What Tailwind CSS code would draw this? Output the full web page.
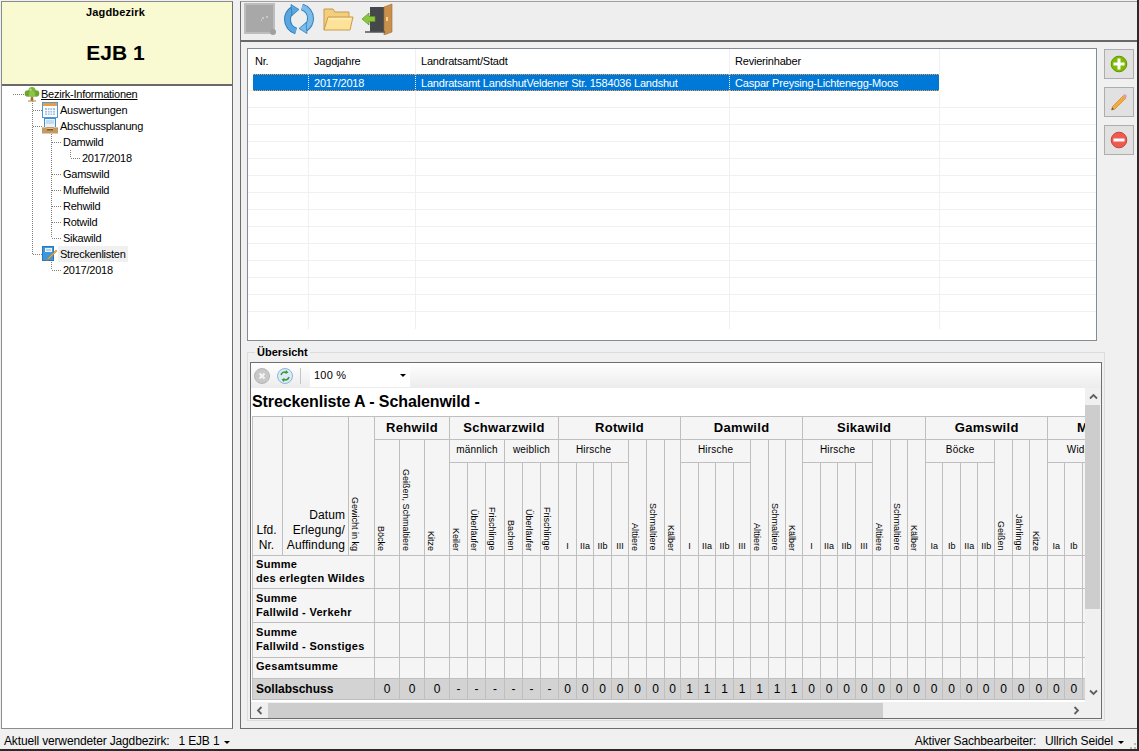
<!DOCTYPE html>
<html lang="de">
<head>
<meta charset="utf-8">
<title>Jagdbezirk</title>
<script src="https://cdn.jsdelivr.net/npm/@tailwindcss/browser@4"></script>
</head>
<body class="bg-white">
<div class="w-[1139px] h-[751px] overflow-hidden bg-[#f0f0f0] flex flex-col pl-px pt-px font-['Liberation_Sans',Arial,sans-serif] text-[11px] text-black border-r-2 border-b-2 border-[#2a2a2a]">
  <div class="flex h-[728px] shrink-0">
    <!-- left panel -->
    <div class="w-[232px] shrink-0 flex flex-col border border-[#8c8c8c] border-r-[#6e6e6e] bg-white">
      <div class="h-[82px] shrink-0 bg-[#f9f9d2] border-b-2 border-[#696969] flex flex-col items-center box-content pr-[3px]">
        <div class="mt-[3px] h-[14px] leading-[14px] font-bold tracking-[0.15px]">Jagdbezirk</div>
        <div class="mt-[20px] h-[28px] leading-[28px] text-[21px] font-bold">EJB 1</div>
      </div>
      <div class="relative flex-1 tracking-[-0.25px]">
        <svg class="absolute left-[-2px] top-[-86px]" width="100" height="300" fill="none" stroke="#808080" stroke-dasharray="1 1" shape-rendering="crispEdges">
          <path d="M13 94.500H24M32.500 101V254M33 110.500H42M33 126.500H42M33 254.500H42M51.500 134V238M52 142.500H62M52 174.500H62M52 190.500H62M52 206.500H62M52 222.500H62M52 238.500H62M70.500 150V158M71 158.500H81M51.500 262V270M52 270.500H62"/>
        </svg>
        <div class="relative flex flex-col">
          <div class="h-4 flex items-center pl-[22px]">
            <svg class="w-[16px] h-[16px] shrink-0" viewBox="0 0 16 16"><path d="M7 10h2l.5 5h-3z" fill="#a5672a"/><path d="M4 15h8" stroke="#c99255" stroke-width="1.200"/><circle cx="8" cy="4.500" r="3.600" fill="#7cb53a"/><circle cx="4" cy="7.500" r="3.300" fill="#6da52f"/><circle cx="12" cy="7.500" r="3.300" fill="#6da52f"/><circle cx="8" cy="8" r="3.200" fill="#8cc348"/><circle cx="6.500" cy="3.800" r="1.200" fill="#b7dd80"/></svg>
            <span class="ml-[1px] underline">Bezirk-Informationen</span>
          </div>
          <div class="h-4 flex items-center pl-[40px]">
            <svg class="w-[16px] h-[16px] shrink-0" viewBox="0 0 16 16"><rect x=".5" y=".5" width="15" height="15" fill="#fff" stroke="#4c9ad8"/><rect x="1" y="1" width="14" height="3" fill="#ef9a3e"/><path d="M3 6h10v7H3z" fill="#a9c3e6"/><path d="M3 8.500h10M3 11h10M5.500 6v7M8 6v7M10.500 6v7" stroke="#fff" stroke-width=".8"/></svg>
            <span class="ml-[2px]">Auswertungen</span>
          </div>
          <div class="h-4 flex items-center pl-[40px]">
            <svg class="w-[16px] h-[16px] shrink-0" viewBox="0 0 16 16"><rect x="2.500" y=".5" width="11" height="9" fill="#eaf3fb" stroke="#3f8fd2"/><path d="M4 3h8M4 5h8" stroke="#9fc5e6"/><path d="M0 9h16v6.500H0z" fill="#c49a62"/><path d="M0 9h4l1 2h6l1-2h4v1H0z" fill="#e3c08c"/><rect x="5" y="11" width="6" height="1.500" fill="#7c5a2e"/></svg>
            <span class="ml-[2px]">Abschussplanung</span>
          </div>
          <div class="h-4 flex items-center pl-[61px]">Damwild</div>
          <div class="h-4 flex items-center pl-[80px]">2017/2018</div>
          <div class="h-4 flex items-center pl-[61px]">Gamswild</div>
          <div class="h-4 flex items-center pl-[61px]">Muffelwild</div>
          <div class="h-4 flex items-center pl-[61px]">Rehwild</div>
          <div class="h-4 flex items-center pl-[61px]">Rotwild</div>
          <div class="h-4 flex items-center pl-[61px]">Sikawild</div>
          <div class="h-4 flex items-center pl-[40px]">
            <svg class="w-[16px] h-[16px] shrink-0" viewBox="0 0 16 16"><rect x=".5" y=".5" width="11" height="14" fill="#3d97dc" stroke="#2a78b8"/><rect x="3" y="2" width="7" height="4" fill="#e8f3fb"/><path d="M4 4h5" stroke="#7fb3dd"/><path d="M15 5l-8 8-2.500 1.500L6 12l8-8z" fill="#f3a93c" stroke="#b9772a" stroke-width=".5"/></svg>
            <span class="px-[2px] h-4 leading-4 bg-[#f0f0f0]">Streckenlisten</span>
          </div>
          <div class="h-4 flex items-center pl-[61px]">2017/2018</div>
        </div>
      </div>
    </div>
    <div class="w-[7px] shrink-0"></div>
    <!-- right panel -->
    <div class="w-[897px] shrink-0 flex flex-col border-l border-b border-l-[#6e6e6e] border-b-[#6e6e6e] border-t border-t-[#a0a0a0]">
      <div class="h-[37px] shrink-0 bg-[#eeeeee] border-b-2 border-[#696969] box-content flex items-start pl-[3px] pt-[1px] gap-[7px]">
        <svg class="w-[32px] h-[32px] shrink-0" viewBox="0 0 32 32"><rect x="1" y="1" width="29" height="29" fill="#a8a8a8" stroke="#bdbdbd" stroke-width="2"/><path d="M18 15h2M22 14h2M17 17h1" stroke="#e8e8e8"/><circle cx="29" cy="29" r="3" fill="#a0a0a0"/></svg>
        <svg class="w-[32px] h-[32px] shrink-0" viewBox="0 0 32 32" fill="none"><path d="M13 28C8 26.500 4.500 22 4.500 16.500 4.500 12 7 8.500 10 6.500" stroke="#2f7fbd" stroke-width="7"/><path d="M13 28C8 26.500 4.500 22 4.500 16.500 4.500 12 7 8.500 10 6.500" stroke="#5ba6de" stroke-width="5"/><path d="M19 4C24 5.500 27.500 10 27.500 15.500 27.500 20 25 23.500 22 25.500" stroke="#2f7fbd" stroke-width="7"/><path d="M19 4C24 5.500 27.500 10 27.500 15.500 27.500 20 25 23.500 22 25.500" stroke="#7cbcea" stroke-width="5"/><path d="M8 1.500l8 5-7 6z" fill="#5ba6de" stroke="#2f7fbd" stroke-width=".8"/><path d="M24 30.500l-8-5 7-6z" fill="#7cbcea" stroke="#2f7fbd" stroke-width=".8"/></svg>
        <svg class="w-[32px] h-[32px] shrink-0" viewBox="0 0 32 32"><path d="M2 27V6h9l2 3h14v5" fill="#f3cf7d" stroke="#c99a4c"/><path d="M2 27l4-13h25l-3 13z" fill="#fde29a" stroke="#c99a4c"/><path d="M6 16h23" stroke="#fff3c9"/></svg>
        <svg class="w-[32px] h-[32px] shrink-0" viewBox="0 0 32 32"><path d="M9 4h16v25H9z" fill="#45484b"/><path d="M23 4l8-3v28l-8 3z" fill="#c98f4d" stroke="#9c6b33" stroke-width=".6"/><rect x="25" y="14" width="2" height="4" fill="#f2d28c"/><path d="M4 29h20" stroke="#555" stroke-width="1.500"/><path d="M1 16l7-6v3.500h6v5H8V22z" fill="#8cc63f" stroke="#5f9420" stroke-width=".7"/></svg>
      </div>
      <div class="flex pt-[6px] pl-[6px] shrink-0">
        <div class="w-[850px] h-[293px] shrink-0 border border-[#838c94] bg-white overflow-hidden tracking-[-0.2px]">
          <div class="h-[25px] flex leading-[25px]">
            <div class="w-[61px] pl-[7px] border-r border-[#f0f0f0]">Nr.</div>
            <div class="w-[107px] pl-[5px] border-r border-[#f0f0f0]">Jagdjahre</div>
            <div class="w-[314px] pl-[5px] border-r border-[#f0f0f0]">Landratsamt/Stadt</div>
            <div class="w-[210px] pl-[5px] border-r border-[#f0f0f0]">Revierinhaber</div>
          </div>
          <div class="h-[17px] flex leading-[16px] text-white">
            <div class="w-[5px] shrink-0 bg-white border-b border-[#f0f0f0]"></div>
            <div class="w-[55px] bg-[#0078d7] border-y border-dotted border-[#f59b3a]"></div>
            <div class="w-[107px] pl-[5px] bg-[#0078d7] border-y border-l border-dotted border-y-[#f59b3a] border-l-white">2017/2018</div>
            <div class="w-[314px] pl-[5px] bg-[#0078d7] border-y border-l border-dotted border-y-[#f59b3a] border-l-white whitespace-nowrap">Landratsamt LandshutVeldener Str. 1584036 Landshut</div>
            <div class="w-[210px] pl-[5px] bg-[#0078d7] border-y border-l border-dotted border-y-[#f59b3a] border-l-white whitespace-nowrap">Caspar Preysing-Lichtenegg-Moos</div>
          </div>
          <div class="h-[17px] flex border-b border-[#f0f0f0]"><div class="w-[61px] border-r border-[#f0f0f0]"></div><div class="w-[107px] border-r border-[#f0f0f0]"></div><div class="w-[314px] border-r border-[#f0f0f0]"></div><div class="w-[210px] border-r border-[#f0f0f0]"></div></div>
          <div class="h-[17px] flex border-b border-[#f0f0f0]"><div class="w-[61px] border-r border-[#f0f0f0]"></div><div class="w-[107px] border-r border-[#f0f0f0]"></div><div class="w-[314px] border-r border-[#f0f0f0]"></div><div class="w-[210px] border-r border-[#f0f0f0]"></div></div>
          <div class="h-[17px] flex border-b border-[#f0f0f0]"><div class="w-[61px] border-r border-[#f0f0f0]"></div><div class="w-[107px] border-r border-[#f0f0f0]"></div><div class="w-[314px] border-r border-[#f0f0f0]"></div><div class="w-[210px] border-r border-[#f0f0f0]"></div></div>
          <div class="h-[17px] flex border-b border-[#f0f0f0]"><div class="w-[61px] border-r border-[#f0f0f0]"></div><div class="w-[107px] border-r border-[#f0f0f0]"></div><div class="w-[314px] border-r border-[#f0f0f0]"></div><div class="w-[210px] border-r border-[#f0f0f0]"></div></div>
          <div class="h-[17px] flex border-b border-[#f0f0f0]"><div class="w-[61px] border-r border-[#f0f0f0]"></div><div class="w-[107px] border-r border-[#f0f0f0]"></div><div class="w-[314px] border-r border-[#f0f0f0]"></div><div class="w-[210px] border-r border-[#f0f0f0]"></div></div>
          <div class="h-[17px] flex border-b border-[#f0f0f0]"><div class="w-[61px] border-r border-[#f0f0f0]"></div><div class="w-[107px] border-r border-[#f0f0f0]"></div><div class="w-[314px] border-r border-[#f0f0f0]"></div><div class="w-[210px] border-r border-[#f0f0f0]"></div></div>
          <div class="h-[17px] flex border-b border-[#f0f0f0]"><div class="w-[61px] border-r border-[#f0f0f0]"></div><div class="w-[107px] border-r border-[#f0f0f0]"></div><div class="w-[314px] border-r border-[#f0f0f0]"></div><div class="w-[210px] border-r border-[#f0f0f0]"></div></div>
          <div class="h-[17px] flex border-b border-[#f0f0f0]"><div class="w-[61px] border-r border-[#f0f0f0]"></div><div class="w-[107px] border-r border-[#f0f0f0]"></div><div class="w-[314px] border-r border-[#f0f0f0]"></div><div class="w-[210px] border-r border-[#f0f0f0]"></div></div>
          <div class="h-[17px] flex border-b border-[#f0f0f0]"><div class="w-[61px] border-r border-[#f0f0f0]"></div><div class="w-[107px] border-r border-[#f0f0f0]"></div><div class="w-[314px] border-r border-[#f0f0f0]"></div><div class="w-[210px] border-r border-[#f0f0f0]"></div></div>
          <div class="h-[17px] flex border-b border-[#f0f0f0]"><div class="w-[61px] border-r border-[#f0f0f0]"></div><div class="w-[107px] border-r border-[#f0f0f0]"></div><div class="w-[314px] border-r border-[#f0f0f0]"></div><div class="w-[210px] border-r border-[#f0f0f0]"></div></div>
          <div class="h-[17px] flex border-b border-[#f0f0f0]"><div class="w-[61px] border-r border-[#f0f0f0]"></div><div class="w-[107px] border-r border-[#f0f0f0]"></div><div class="w-[314px] border-r border-[#f0f0f0]"></div><div class="w-[210px] border-r border-[#f0f0f0]"></div></div>
          <div class="h-[17px] flex border-b border-[#f0f0f0]"><div class="w-[61px] border-r border-[#f0f0f0]"></div><div class="w-[107px] border-r border-[#f0f0f0]"></div><div class="w-[314px] border-r border-[#f0f0f0]"></div><div class="w-[210px] border-r border-[#f0f0f0]"></div></div>
          <div class="h-[17px] flex border-b border-[#f0f0f0]"><div class="w-[61px] border-r border-[#f0f0f0]"></div><div class="w-[107px] border-r border-[#f0f0f0]"></div><div class="w-[314px] border-r border-[#f0f0f0]"></div><div class="w-[210px] border-r border-[#f0f0f0]"></div></div>
          <div class="h-[17px] flex"><div class="w-[61px] border-r border-[#f0f0f0]"></div><div class="w-[107px] border-r border-[#f0f0f0]"></div><div class="w-[314px] border-r border-[#f0f0f0]"></div><div class="w-[210px] border-r border-[#f0f0f0]"></div></div>
        </div>
        <div class="ml-[7px] flex flex-col gap-[8px] pt-px">
          <button class="w-[30px] h-[30px] bg-[#e1e1e1] border border-[#adadad] flex items-center justify-center">
            <svg class="w-[18px] h-[18px]" viewBox="0 0 18 18"><circle cx="9" cy="9" r="7.800" fill="#7fba00" stroke="#5f9a00"/><path d="M9 3.500v11M3.500 9h11" stroke="#fff" stroke-width="3"/></svg>
          </button>
          <button class="w-[30px] h-[30px] bg-[#e1e1e1] border border-[#adadad] flex items-center justify-center">
            <svg class="w-[18px] h-[18px]" viewBox="0 0 18 18"><path d="M13.500 2.500l2.500 2.500L5 16l-3.500 1L2.500 13.500z" fill="#f3a93c" stroke="#c47f25" stroke-width=".6"/><path d="M13 2.500l1-1c.5-.5 1-.5 1.500 0l1 1c.5.5.5 1 0 1.500l-1 1z" fill="#d79ad0"/><path d="M1.500 17l.7-2.500 1.800 1.800z" fill="#555"/></svg>
          </button>
          <button class="w-[30px] h-[30px] bg-[#e1e1e1] border border-[#adadad] flex items-center justify-center">
            <svg class="w-[18px] h-[18px]" viewBox="0 0 18 18"><circle cx="9" cy="9" r="7.800" fill="#ee5a50" stroke="#c9423a"/><path d="M3.500 9h11" stroke="#fff" stroke-width="3"/></svg>
          </button>
        </div>
      </div>
      <!-- group box -->
      <div class="relative mt-[11px] ml-[6px] w-[858px] h-[369px] shrink-0 border border-[#dcdcdc] pl-[2px] pt-[9px]">
        <span class="absolute left-[7px] top-[-7px] px-[2px] bg-[#f0f0f0] font-bold leading-[13px]">Übersicht</span>
        <div class="w-[852px] h-[357px] border border-[#6e6e6e] flex flex-col">
          <div class="h-[25px] shrink-0 bg-gradient-to-b from-white to-[#ececec] flex items-center pl-[3px]">
            <svg class="w-[16px] h-[16px] shrink-0" viewBox="0 0 16 16"><circle cx="8" cy="8" r="7.500" fill="#c8c8c8" stroke="#b5b5b5"/><path d="M5.500 5.500l5 5M10.500 5.500l-5 5" stroke="#f4f4f4" stroke-width="2"/></svg>
            <svg class="ml-[7px] w-[16px] h-[16px] shrink-0" viewBox="0 0 16 16"><circle cx="8" cy="8" r="7.500" fill="#dbeaf8" stroke="#8db5dd"/><path d="M4 7c.5-2 2-3 4-3l1.500.7M12 9c-.5 2-2 3-4 3l-1.500-.7" fill="none" stroke="#3f9a2c" stroke-width="1.400"/><path d="M9 2l2.500 2.500L8.500 6zM7 14l-2.500-2.500L7.500 10z" fill="#3f9a2c"/></svg>
            <div class="ml-[7px] w-px h-[16px] bg-[#c4c4c4]"></div>
            <div class="ml-[9px] w-[100px] h-[23px] bg-white flex items-center pl-[4px] relative text-[11px] tracking-[0.2px]">100 %
              <span class="absolute right-[4px] top-[10px] border-x-[3px] border-t-[3px] border-x-transparent border-t-black"></span>
            </div>
          </div>
          <div class="flex flex-1 min-h-0">
            <div class="w-[834px] shrink-0 flex flex-col">
              <div class="h-[314px] shrink-0 bg-white overflow-hidden">
                <div class="h-[28px] pl-px leading-[28px] text-[16px] font-bold whitespace-nowrap tracking-[-0.1px]">Streckenliste A - Schalenwild -</div>
                <div class="pl-px">
                  <table class="table-fixed w-[920px] border-collapse bg-[#f5f5f5] [&_td]:border [&_td]:border-[#bfbfbf]">
                    <colgroup>
                      <col class="w-[30px]"><col class="w-[66px]"><col class="w-[26px]">
                      <col class="w-[25px]"><col class="w-[25px]"><col class="w-[25px]">
                      <col class="w-[18px]"><col class="w-[18px]"><col class="w-[19px]"><col class="w-[18px]"><col class="w-[18px]"><col class="w-[18px]">
                      <col class="w-[18px]"><col class="w-[17px]"><col class="w-[18px]"><col class="w-[17px]"><col class="w-[18px]"><col class="w-[18px]"><col class="w-[16px]">
                      <col class="w-[18px]"><col class="w-[17px]"><col class="w-[18px]"><col class="w-[17px]"><col class="w-[18px]"><col class="w-[17px]"><col class="w-[17px]">
                      <col class="w-[18px]"><col class="w-[17px]"><col class="w-[18px]"><col class="w-[17px]"><col class="w-[18px]"><col class="w-[17px]"><col class="w-[18px]">
                      <col class="w-[17px]"><col class="w-[18px]"><col class="w-[17px]"><col class="w-[17px]"><col class="w-[18px]"><col class="w-[17px]"><col class="w-[18px]">
                      <col class="w-[17px]"><col class="w-[18px]"><col class="w-[18px]"><col class="w-[18px]"><col class="w-[18px]"><col class="w-[18px]"><col class="w-[18px]">
                    </colgroup>
                    <tr class="h-[23px] text-[13px] font-bold text-center tracking-[0.3px]">
                      <td rowspan="3" class="align-bottom text-center text-[12px] font-normal leading-[15px] tracking-normal pb-[2px] pr-[2px]">Lfd.<br>Nr.</td>
                      <td rowspan="3" class="align-bottom text-right text-[12px] font-normal leading-[15px] tracking-[0.1px] pb-[2px]"><div class="pr-[3px] whitespace-nowrap">Datum<br>Erlegung/<br>Auffindung</div></td>
                      <td rowspan="3" class="align-bottom font-normal tracking-normal"><div class="[writing-mode:vertical-rl] text-[9px] leading-[11px] mx-auto mb-[4px] whitespace-nowrap">Gewicht in kg</div></td>
                      <td colspan="3">Rehwild</td><td colspan="6">Schwarzwild</td><td colspan="7">Rotwild</td><td colspan="7">Damwild</td><td colspan="7">Sikawild</td><td colspan="7">Gamswild</td><td colspan="7" class="whitespace-nowrap">Muffelwild</td>
                    </tr>
                    <tr class="h-[23px] text-[10px] text-center tracking-[0.2px]">
                      <td rowspan="2" class="align-bottom tracking-normal"><div class="[writing-mode:vertical-rl] text-[9px] leading-[11px] mx-auto mb-[4px] whitespace-nowrap">Böcke</div></td>
                      <td rowspan="2" class="align-bottom tracking-normal"><div class="[writing-mode:vertical-rl] text-[9px] leading-[11px] mx-auto mb-[4px] whitespace-nowrap">Geißen, Schmaltiere</div></td>
                      <td rowspan="2" class="align-bottom tracking-normal"><div class="[writing-mode:vertical-rl] text-[9px] leading-[11px] mx-auto mb-[4px] whitespace-nowrap">Kitze</div></td>
                      <td colspan="3" class="pb-[4px]">männlich</td><td colspan="3" class="pb-[4px]">weiblich</td>
                      <td colspan="4" class="pb-[4px]">Hirsche</td>
                      <td rowspan="2" class="align-bottom tracking-normal"><div class="[writing-mode:vertical-rl] text-[9px] leading-[11px] mx-auto mb-[4px] whitespace-nowrap">Alttiere</div></td>
                      <td rowspan="2" class="align-bottom tracking-normal"><div class="[writing-mode:vertical-rl] text-[9px] leading-[11px] mx-auto mb-[4px] whitespace-nowrap">Schmaltiere</div></td>
                      <td rowspan="2" class="align-bottom tracking-normal"><div class="[writing-mode:vertical-rl] text-[9px] leading-[11px] mx-auto mb-[4px] whitespace-nowrap">Kälber</div></td>
                      <td colspan="4" class="pb-[4px]">Hirsche</td>
                      <td rowspan="2" class="align-bottom tracking-normal"><div class="[writing-mode:vertical-rl] text-[9px] leading-[11px] mx-auto mb-[4px] whitespace-nowrap">Alttiere</div></td>
                      <td rowspan="2" class="align-bottom tracking-normal"><div class="[writing-mode:vertical-rl] text-[9px] leading-[11px] mx-auto mb-[4px] whitespace-nowrap">Schmaltiere</div></td>
                      <td rowspan="2" class="align-bottom tracking-normal"><div class="[writing-mode:vertical-rl] text-[9px] leading-[11px] mx-auto mb-[4px] whitespace-nowrap">Kälber</div></td>
                      <td colspan="4" class="pb-[4px]">Hirsche</td>
                      <td rowspan="2" class="align-bottom tracking-normal"><div class="[writing-mode:vertical-rl] text-[9px] leading-[11px] mx-auto mb-[4px] whitespace-nowrap">Alttiere</div></td>
                      <td rowspan="2" class="align-bottom tracking-normal"><div class="[writing-mode:vertical-rl] text-[9px] leading-[11px] mx-auto mb-[4px] whitespace-nowrap">Schmaltiere</div></td>
                      <td rowspan="2" class="align-bottom tracking-normal"><div class="[writing-mode:vertical-rl] text-[9px] leading-[11px] mx-auto mb-[4px] whitespace-nowrap">Kälber</div></td>
                      <td colspan="4" class="pb-[4px]">Böcke</td>
                      <td rowspan="2" class="align-bottom tracking-normal"><div class="[writing-mode:vertical-rl] text-[9px] leading-[11px] mx-auto mb-[4px] whitespace-nowrap">Geißen</div></td>
                      <td rowspan="2" class="align-bottom tracking-normal"><div class="[writing-mode:vertical-rl] text-[9px] leading-[11px] mx-auto mb-[4px] whitespace-nowrap">Jährlinge</div></td>
                      <td rowspan="2" class="align-bottom tracking-normal"><div class="[writing-mode:vertical-rl] text-[9px] leading-[11px] mx-auto mb-[4px] whitespace-nowrap">Kitze</div></td>
                      <td colspan="4" class="pb-[4px]">Widder</td>
                      <td rowspan="2"></td><td rowspan="2"></td><td rowspan="2"></td>
                    </tr>
                    <tr class="h-[93px] text-center text-[9px] [&_td]:align-bottom [&_td]:pb-[2px]">
                      <td><div class="[writing-mode:vertical-rl] leading-[11px] mx-auto mb-[2px] whitespace-nowrap">Keiler</div></td>
                      <td><div class="[writing-mode:vertical-rl] leading-[11px] mx-auto mb-[2px] whitespace-nowrap">Überläufer</div></td>
                      <td><div class="[writing-mode:vertical-rl] leading-[11px] mx-auto mb-[2px] whitespace-nowrap">Frischlinge</div></td>
                      <td><div class="[writing-mode:vertical-rl] leading-[11px] mx-auto mb-[2px] whitespace-nowrap">Bachen</div></td>
                      <td><div class="[writing-mode:vertical-rl] leading-[11px] mx-auto mb-[2px] whitespace-nowrap">Überläufer</div></td>
                      <td><div class="[writing-mode:vertical-rl] leading-[11px] mx-auto mb-[2px] whitespace-nowrap">Frischlinge</div></td>
                      <td>I</td><td>IIa</td><td>IIb</td><td>III</td>
                      <td>I</td><td>IIa</td><td>IIb</td><td>III</td>
                      <td>I</td><td>IIa</td><td>IIb</td><td>III</td>
                      <td>Ia</td><td>Ib</td><td>IIa</td><td>IIb</td>
                      <td>Ia</td><td>Ib</td><td>IIa</td><td>IIb</td>
                    </tr>
                    <tr class="h-[33px]">
                      <td colspan="3" class="font-bold pl-[3px] pb-[2px] leading-[14px] tracking-[0.3px]">Summe<br>des erlegten Wildes</td>
                      <td></td><td></td><td></td><td></td><td></td><td></td><td></td><td></td><td></td><td></td><td></td><td></td><td></td><td></td><td></td><td></td><td></td><td></td><td></td><td></td><td></td><td></td><td></td><td></td><td></td><td></td><td></td><td></td><td></td><td></td><td></td><td></td><td></td><td></td><td></td><td></td><td></td><td></td><td></td><td></td><td></td><td></td><td></td><td></td>
                    </tr>
                    <tr class="h-[34px]">
                      <td colspan="3" class="font-bold pl-[3px] pb-[2px] leading-[14px] tracking-[0.3px]">Summe<br>Fallwild - Verkehr</td>
                      <td></td><td></td><td></td><td></td><td></td><td></td><td></td><td></td><td></td><td></td><td></td><td></td><td></td><td></td><td></td><td></td><td></td><td></td><td></td><td></td><td></td><td></td><td></td><td></td><td></td><td></td><td></td><td></td><td></td><td></td><td></td><td></td><td></td><td></td><td></td><td></td><td></td><td></td><td></td><td></td><td></td><td></td><td></td><td></td>
                    </tr>
                    <tr class="h-[35px]">
                      <td colspan="3" class="font-bold pl-[3px] pb-[2px] leading-[14px] tracking-[0.3px]">Summe<br>Fallwild - Sonstiges</td>
                      <td></td><td></td><td></td><td></td><td></td><td></td><td></td><td></td><td></td><td></td><td></td><td></td><td></td><td></td><td></td><td></td><td></td><td></td><td></td><td></td><td></td><td></td><td></td><td></td><td></td><td></td><td></td><td></td><td></td><td></td><td></td><td></td><td></td><td></td><td></td><td></td><td></td><td></td><td></td><td></td><td></td><td></td><td></td><td></td>
                    </tr>
                    <tr class="h-[21px]">
                      <td colspan="3" class="font-bold pl-[3px] pb-[4px] leading-[14px] tracking-[0.3px]">Gesamtsumme</td>
                      <td></td><td></td><td></td><td></td><td></td><td></td><td></td><td></td><td></td><td></td><td></td><td></td><td></td><td></td><td></td><td></td><td></td><td></td><td></td><td></td><td></td><td></td><td></td><td></td><td></td><td></td><td></td><td></td><td></td><td></td><td></td><td></td><td></td><td></td><td></td><td></td><td></td><td></td><td></td><td></td><td></td><td></td><td></td><td></td>
                    </tr>
                    <tr class="h-[21px] bg-[#d3d3d3] text-center text-[12px]">
                      <td colspan="3" class="text-left font-bold pl-[3px]">Sollabschuss</td>
                      <td>0</td><td>0</td><td>0</td><td>-</td><td>-</td><td>-</td><td>-</td><td>-</td><td>-</td><td>0</td><td>0</td><td>0</td><td>0</td><td>0</td><td>0</td><td>0</td><td>1</td><td>1</td><td>1</td><td>1</td><td>1</td><td>1</td><td>1</td><td>0</td><td>0</td><td>0</td><td>0</td><td>0</td><td>0</td><td>0</td><td>0</td><td>0</td><td>0</td><td>0</td><td>0</td><td>0</td><td>0</td><td>0</td><td>0</td><td>0</td><td>0</td><td>0</td><td>0</td><td>0</td>
                    </tr>
                  </table>
                </div>
              </div>
              <div class="h-[16px] shrink-0 flex items-center bg-[#f0f0f0]">
                <div class="w-[17px] shrink-0 flex justify-center"><svg class="w-[7px] h-[9px]" viewBox="0 0 7 9"><path d="M5.500 1L2 4.500 5.500 8" fill="none" stroke="#606060" stroke-width="1.800"/></svg></div>
                <div class="w-[615px] h-[15px] bg-[#cdcdcd] shrink-0"></div>
                <div class="ml-auto w-[17px] shrink-0 flex justify-center"><svg class="w-[7px] h-[9px]" viewBox="0 0 7 9"><path d="M1.500 1L5 4.500 1.500 8" fill="none" stroke="#606060" stroke-width="1.800"/></svg></div>
              </div>
            </div>
            <div class="w-[16px] shrink-0 bg-[#f0f0f0] flex flex-col">
              <div class="h-[17px] shrink-0 flex items-center justify-center"><svg class="w-[9px] h-[7px]" viewBox="0 0 9 7"><path d="M1 5.500L4.500 2 8 5.500" fill="none" stroke="#606060" stroke-width="1.800"/></svg></div>
              <div class="h-[204px] shrink-0 w-[15px] bg-[#cdcdcd]"></div>
              <div class="mt-[75px] h-[17px] shrink-0 flex items-center justify-center"><svg class="w-[9px] h-[7px]" viewBox="0 0 9 7"><path d="M1 1.500L4.500 5 8 1.500" fill="none" stroke="#606060" stroke-width="1.800"/></svg></div>
            </div>
          </div>
        </div>
      </div>
    </div>
  </div>
  <!-- status bar -->
  <div class="flex-1 flex items-center text-[12px] pl-[3px] pt-[3px] relative tracking-[-0.15px]">
    <span>Aktuell verwendeter Jagdbezirk:</span>
    <span class="ml-[9px]">1 EJB 1</span>
    <span class="ml-[5px] mt-[2px] border-x-[3px] border-t-[3px] border-x-transparent border-t-black"></span>
    <span class="ml-auto">Aktiver Sachbearbeiter:</span>
    <span class="ml-[9px]">Ullrich Seidel</span>
    <span class="ml-[5px] mr-[13px] mt-[2px] border-x-[3px] border-t-[3px] border-x-transparent border-t-black"></span>
    <svg class="absolute right-0 bottom-0 w-[8px] h-[8px]" viewBox="0 0 8 8"><path d="M5 1h2v2H5zM5 5h2v2H5zM1 5h2v2H1z" fill="#b8b8b8"/></svg>
  </div>
</div>
</body>
</html>
